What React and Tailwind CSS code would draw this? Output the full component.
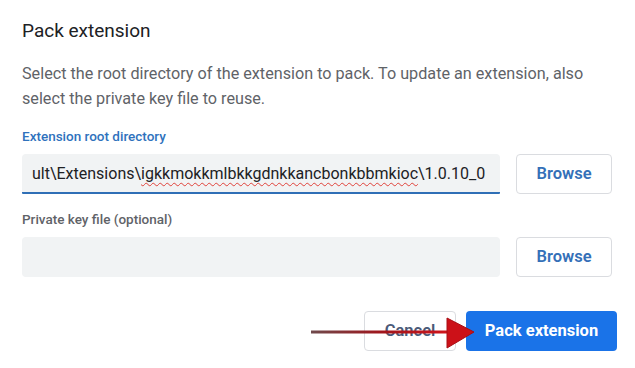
import React from "react";

const Field = ({ label, labelClass, value, focused }) => (
  <div>
    <div className={`text-[13.5px] leading-[18px] font-medium ${labelClass}`}>{label}</div>
    <div className="flex items-center mt-[9px]">
      <div
        className={`w-[478px] h-[40px] bg-[#f1f3f4] rounded-t-[4px] flex items-center px-[10px] overflow-hidden whitespace-nowrap ${
          focused ? "border-b-2 border-[#2f6fb6] rounded-b-[1px]" : "rounded-b-[4px]"
        }`}
      >
        {value}
      </div>
      <button className="ml-[16px] w-[96px] h-[40px] border border-[#dadce0] rounded-[4px] bg-white text-[16.5px] font-semibold text-[#3470b8]">
        Browse
      </button>
    </div>
  </div>
);

export default function App() {
  return (
    <div
      className="relative w-[635px] h-[368px] bg-white pl-[22px] pt-[18px]"
      style={{ fontFamily: "Roboto, 'Noto Sans', Arial, sans-serif" }}
    >
      <h1 className="text-[19px] leading-[26px] text-[#202124]">Pack extension</h1>

      <p className="mt-[17px] text-[16.2px] leading-[25px] text-[#5f6368] w-[605px]">
        Select the root directory of the extension to pack. To update an extension, also
        <br />
        select the private key file to reuse.
      </p>

      <div className="mt-[16px]">
        <Field
          label="Extension root directory"
          labelClass="text-[#2f72bd]"
          focused
          value={
            <span className="text-[16px] text-[#202124] pt-[2px]">
              ult\Extensions\
              <span className="underline decoration-wavy decoration-[#e0413a] decoration-1 underline-offset-[3px]">
                igkkmokkmlbkkgdnkkancbonkbbmkioc
              </span>
              \1.0.10_0
            </span>
          }
        />
      </div>

      <div className="mt-[16px]">
        <Field label="Private key file (optional)" labelClass="text-[#5f6368]" value={null} />
      </div>

      <div className="mt-[34px] flex justify-end gap-[10px] pr-[18px]">
        <button className="w-[92px] h-[40px] border border-[#dadce0] rounded-[4px] bg-white text-[16.5px] font-semibold text-[#4a5a78]">
          Cancel
        </button>
        <button className="w-[151px] h-[40px] rounded-[4px] bg-[#1a73e8] text-[16.5px] font-bold text-white">
          Pack extension
        </button>
      </div>

      {/* red annotation arrow */}
      <svg className="absolute left-[311px] top-[316px]" width="166" height="34" viewBox="0 0 166 34">
        <defs>
          <linearGradient id="shaft" x1="0" y1="0" x2="1" y2="0">
            <stop offset="0" stopColor="#6e4a4c" />
            <stop offset="0.5" stopColor="#a0161c" />
            <stop offset="1" stopColor="#d2141b" />
          </linearGradient>
        </defs>
        <rect x="0" y="14.5" width="140" height="3" fill="url(#shaft)" />
        <polygon points="136,2 136,32 163,16" fill="#cc1118" stroke="#a80e14" strokeWidth="1" />
      </svg>
    </div>
  );
}
